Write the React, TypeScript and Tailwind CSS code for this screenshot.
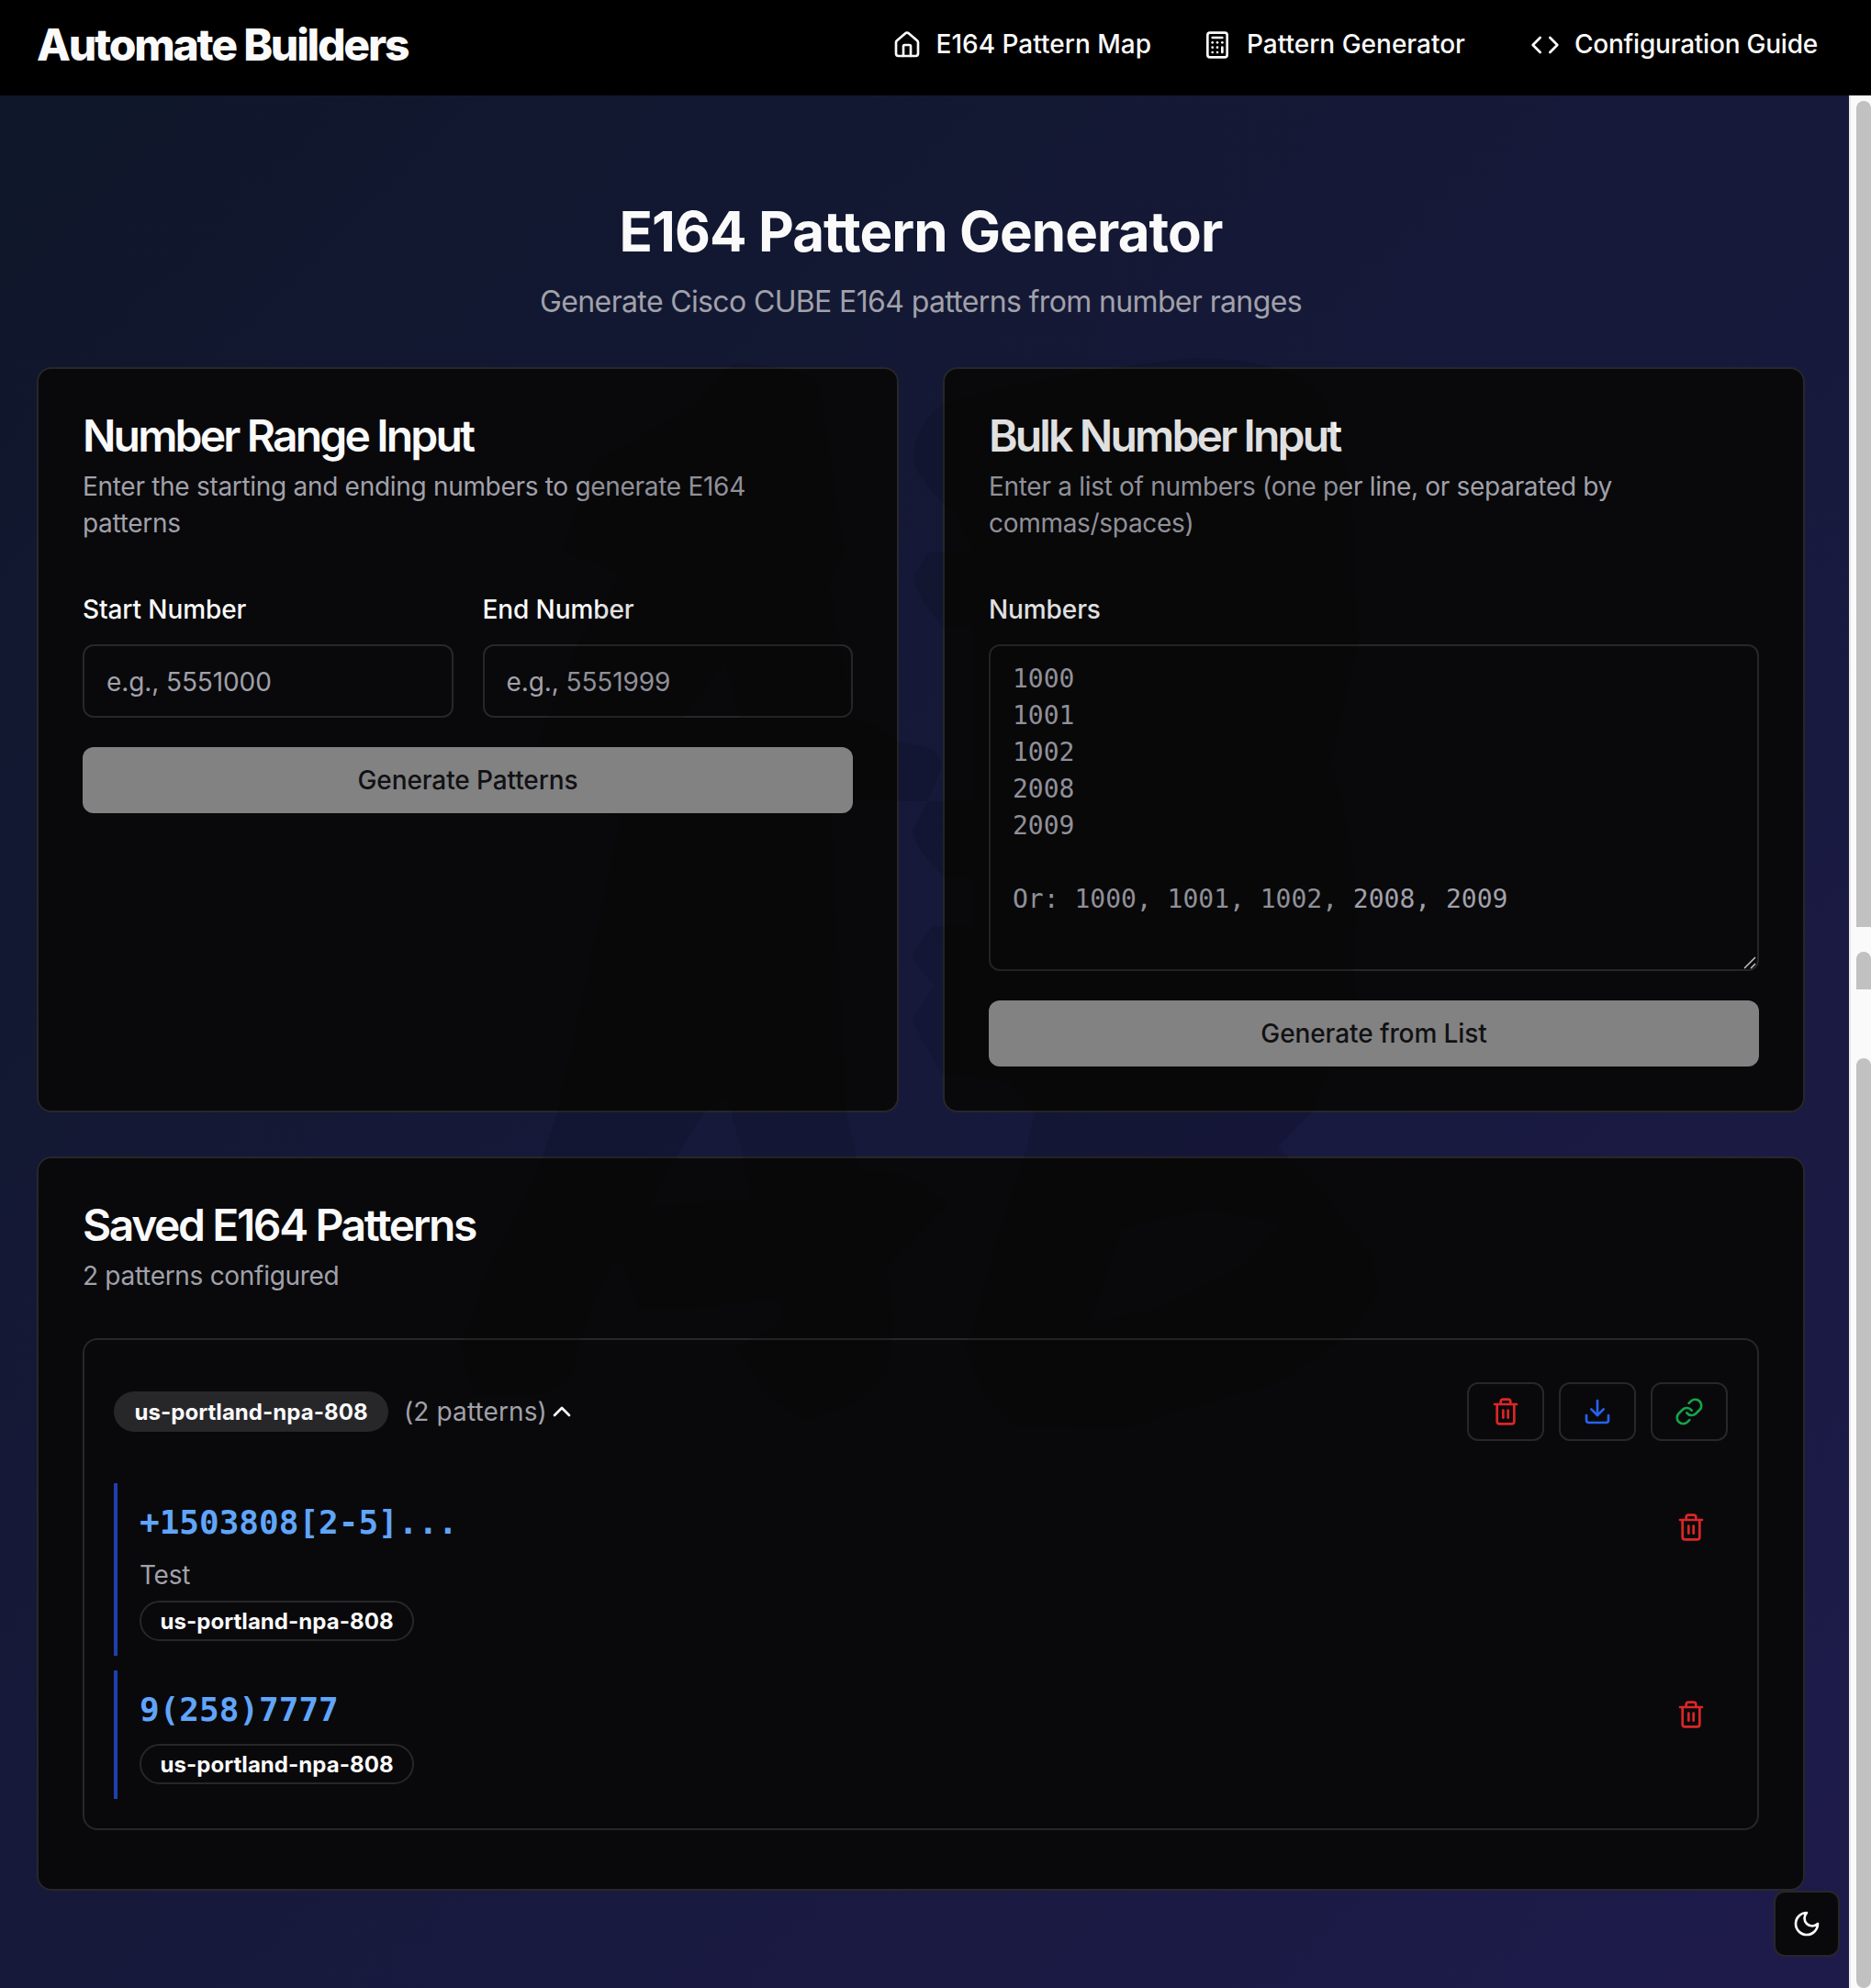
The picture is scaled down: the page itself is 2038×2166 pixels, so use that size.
import React from "react";
import { Calculator, ChevronUp, Code, Download, House, Link, Trash2 } from "lucide-react";

const CARD = "rounded-2xl border-2 border-[#27272a] bg-[#09090b] p-12";
const FIELD =
  "block w-full rounded-xl border-2 border-[#27272a] bg-[#09090b] px-6 text-[28px] text-[#fafafa] placeholder:text-[#a1a1aa] placeholder:opacity-100 outline-none";
const ACTION =
  "relative z-20 mt-8 flex h-[72px] w-full items-center justify-center rounded-xl bg-[#828283] text-[28px] font-medium tracking-[-0.1px] text-[#111113]";
const BADGE =
  "flex h-11 w-[299px] items-center justify-center rounded-full pt-[2px] text-[24px] font-bold leading-8 tracking-[0.05px] text-[#fafafa]";
const TOOL = "flex h-16 w-[84px] items-center justify-center rounded-xl border-2 border-[#27272a]";

function NavItem({ icon, label }: { icon: React.ReactNode; label: string }) {
  return (
    <a className="flex items-center gap-4 text-[28px] font-medium leading-10 text-[#fafafa]">
      {icon}
      <span className="-mt-[3px]">{label}</span>
    </a>
  );
}

function CardHeader({ title, text, tight }: { title: string; text: string; tight?: boolean }) {
  return (
    <div className="pb-12">
      <h3
        className={
          "pt-px text-[48px] font-semibold leading-[47px] text-[#fafafa] " +
          (tight ? "tracking-[-2.83px]" : "tracking-[-2.4px]")
        }
      >
        {title}
      </h3>
      <p className="mt-3 max-w-[780px] text-[28px] leading-10 tracking-[-0.3px] text-[#a1a1aa]">{text}</p>
    </div>
  );
}

function Label({ children }: { children: React.ReactNode }) {
  return (
    <div className="mb-4 h-12 pt-1 text-[28px] font-medium leading-[44px] tracking-[-0.1px] text-[#fafafa]">
      {children}
    </div>
  );
}

function PatternRow({ pattern, note }: { pattern: string; note?: string }) {
  return (
    <div className="flex items-start justify-between border-l-4 border-[#1e40af] py-4 pl-6">
      <div className="flex flex-col items-start">
        <div className="h-14 font-['DejaVu_Sans_Mono',monospace] text-[36px] font-bold leading-[54px] text-[#60a5fa]">
          {pattern}
        </div>
        {note && <div className="mt-2 text-[28px] leading-10 tracking-[-0.27px] text-[#a1a1aa]">{note}</div>}
        <div className="mt-2">
          <span className={BADGE + " border-2 border-[#27272a]"}>us-portland-npa-808</span>
        </div>
      </div>
      <button className="flex h-16 w-20 items-center justify-center text-[#dc2626]">
        <Trash2 size={32} />
      </button>
    </div>
  );
}

function Watermark() {
  return (
    <svg className="pointer-events-none absolute left-0 top-0 z-10" width="2014" height="2166" viewBox="0 0 2014 2166" fill="#000" fillOpacity="0.1" fillRule="evenodd">
      <path d="M798 396 Q890 400 894 425 L920 600 L903 635 L930 783 Q960 790 979 808 Q1000 812 1015 816 L1027 832 L1011 873 L905 873 L922 1212 L933 1261 L939 1275 L981 1278 L1035 1310 L966 1380 L974 1440 L966 1496 L928 1531 L874 1548 L832 1517 L802 1468 L851 1440 L851 1415 L767 1425 L695 1426 L675 1369 L656 1397 L633 1457 L622 1503 L590 1520 L515 1520 L503 1464 L530 1384 L568 1313 L591 1261 L607 1212 L640 1060 L676 890 L600 873 L585 810 L630 700 L676 625 L611 600 L650 500 L676 488 L754 442 Z M790 721 L744 783 L806 783 Z M790 1195 L767 1212 L737 1261 L706 1315 L817 1306 L810 1261 L796 1212 Z" />
      <path d="M1027 440 Q1150 405 1301 390 Q1400 390 1440 430 Q1480 520 1475 620 L1480 700 L1450 830 Q1485 940 1475 1040 L1476 1100 L1429 1212 L1392 1250 L1433 1289 L1494 1366 L1502 1408 L1471 1454 L1395 1506 L1295 1534 L1226 1557 L1104 1555 L1073 1520 L1050 1471 L1062 1436 L1081 1366 L1115 1261 L1127 1212 L1100 1180 L1027 1170 Q1000 1130 994 1110 L1018 1074 Q995 1050 994 1040 L1015 1009 L1060 1009 L1060 955 L1027 955 Q997 925 994 905 L1011 873 L1060 873 L1060 683 L1027 683 Q998 650 995 630 L1010 602 L1060 602 L1040 560 Q995 520 995 498 Q998 460 1027 440 Z M1222 1338 L1318 1317 L1395 1334 L1349 1383 L1249 1429 L1188 1440 Z" />
    </svg>
  );
}

export default function App() {
  return (
    <div className="relative flex h-[2166px] w-[2038px] flex-col overflow-hidden bg-black font-['Inter',sans-serif]">
      <header className="flex h-[104px] shrink-0 items-center justify-between bg-black pb-[6px] pl-10 pr-[58px]">
        <div className="text-[48px] font-extrabold leading-none tracking-[-2.2px] text-[#fafafa]">Automate Builders</div>
        <nav className="flex items-center">
          <NavItem icon={<House size={32} />} label="E164 Pattern Map" />
          <div className="w-14" />
          <NavItem icon={<Calculator size={32} />} label="Pattern Generator" />
          <div className="w-[71px]" />
          <div className="tracking-[-0.22px]">
            <NavItem icon={<Code size={32} />} label="Configuration Guide" />
          </div>
        </nav>
      </header>

      <div className="flex flex-1">
        <main className="h-[2062px] w-[2014px] bg-[linear-gradient(135deg,#0f172a,#1e1b4b)] pl-10 pr-12">
          <div className="flex h-[296px] flex-col items-center pt-[112px]">
            <h1 className="text-[60px] font-bold leading-[72px] tracking-[-0.93px] text-[#fafafa]">E164 Pattern Generator</h1>
            <p className="mt-[17px] text-[32px] leading-[48px] tracking-[-0.64px] text-[#a1a1aa]">
              Generate Cisco CUBE E164 patterns from number ranges
            </p>
          </div>

          <div className="grid h-[812px] grid-cols-2 gap-12">
            <section className={CARD}>
              <CardHeader tight title="Number Range Input" text="Enter the starting and ending numbers to generate E164 patterns" />
              <div className="grid grid-cols-2 gap-8">
                <div>
                  <Label>Start Number</Label>
                  <input className={FIELD + " h-20 pt-[2px] tracking-[-0.1px]"} placeholder="e.g., 5551000" />
                </div>
                <div>
                  <Label>End Number</Label>
                  <input className={FIELD + " h-20 pt-[2px] tracking-[-0.1px]"} placeholder="e.g., 5551999" />
                </div>
              </div>
              <button className={ACTION}>Generate Patterns</button>
            </section>

            <section className={CARD}>
              <CardHeader tight title="Bulk Number Input" text="Enter a list of numbers (one per line, or separated by commas/spaces)" />
              <Label>Numbers</Label>
              <div className="relative">
                <textarea
                  className={FIELD + " h-[356px] resize-none py-4 font-['DejaVu_Sans_Mono',monospace] leading-10"}
                  placeholder={"1000\n1001\n1002\n2008\n2009\n\nOr: 1000, 1001, 1002, 2008, 2009"}
                />
                <svg className="absolute bottom-[2px] right-[3px]" width="14" height="14" viewBox="0 0 14 14" stroke="#c4c4c4" strokeWidth="1.5">
                  <path d="M1 13 13 1M8 13l5-5" />
                </svg>
              </div>
              <button className={ACTION}>Generate from List</button>
            </section>
          </div>

          <section className={CARD + " mt-12 h-[800px]"}>
            <CardHeader title="Saved E164 Patterns" text="2 patterns configured" />
            <div className="h-[536px] rounded-2xl border-2 border-[#27272a] px-8 pt-[46px]">
              <div className="mb-[46px] flex h-16 items-center justify-between">
                <div className="flex items-center">
                  <span className={BADGE + " bg-[#27272a]"}>us-portland-npa-808</span>
                  <span className="ml-[17px] text-[28px] leading-10 tracking-[0.12px] text-[#a1a1aa]">(2 patterns)</span>
                  <ChevronUp size={32} className="text-[#fafafa]" />
                </div>
                <div className="flex gap-4">
                  <button className={TOOL + " text-[#dc2626]"}>
                    <Trash2 size={32} />
                  </button>
                  <button className={TOOL + " text-[#2563eb]"}>
                    <Download size={32} />
                  </button>
                  <button className={TOOL + " text-[#16a34a]"}>
                    <Link size={32} />
                  </button>
                </div>
              </div>
              <div className="flex flex-col gap-4">
                <PatternRow pattern="+1503808[2-5]..." note="Test" />
                <PatternRow pattern="9(258)7777" />
              </div>
            </div>
          </section>
        </main>

        <div className="flex w-6 flex-col items-end border-l-2 border-[#e8e8e8] bg-[#fafafa] pt-[6px]">
          <div className="h-[900px] w-4 rounded-t-lg bg-[#c1c1c1]" />
          <div className="mt-[27px] h-[41px] w-4 rounded-t-lg bg-[#c1c1c1]" />
          <div className="mt-[75px] h-[1013px] w-4 rounded-lg bg-[#c1c1c1]" />
        </div>
      </div>

      <Watermark />

      <button className="absolute bottom-[34px] right-[34px] z-20 flex h-[72px] w-[72px] items-center justify-center rounded-xl border-2 border-[#27272a] bg-[#09090b]">
        <svg width="32" height="32" viewBox="0 0 24 24" fill="none" stroke="#fafafa" strokeWidth="2" strokeLinecap="round" strokeLinejoin="round">
          <path d="M12 3a6 6 0 0 0 9 9 9 9 0 1 1-9-9Z" />
        </svg>
      </button>
    </div>
  );
}
